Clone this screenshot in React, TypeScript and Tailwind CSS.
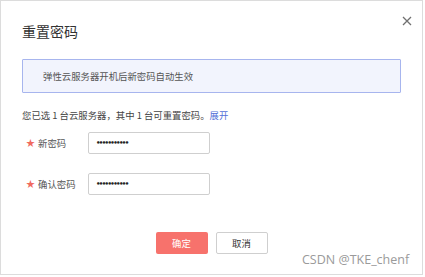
import React from "react";

const cjk = { fontFamily: '"Noto Sans CJK SC", "Noto Sans", sans-serif' };

export default function App() {
  return (
    <div className="w-[425px] h-[277px] bg-white" style={cjk}>
      <div className="relative w-[423px] h-[275px] border border-[#dcdcdc] bg-white px-[21px] flex flex-col">
        <button className="absolute left-[399px] top-[13px] w-[13px] h-[13px] flex items-center justify-center">
          <svg width="10" height="10" viewBox="0 0 10 10">
            <path d="M1 1L9 9M9 1L1 9" stroke="#707070" strokeWidth="1.3" />
          </svg>
        </button>
        <div className="pt-[20px] text-[14px] leading-[20px] text-[#333]">重置密码</div>
        <div className="mt-[18px] h-[34px] border border-[#a7b5ee] bg-[#f2f4fd] rounded-[1px] flex items-center pl-[20px] text-[9.4px] text-[#555]">
          弹性云服务器开机后新密码自动生效
        </div>
        <div className="mt-[14px] text-[9.4px] leading-[16px] text-[#444]">
          您已选 1 台云服务器，其中 1 台可重置密码。<span className="text-[#5470d8]">展开</span>
        </div>
        <div className="mt-[9px] flex items-center">
          <div className="w-[66px] pl-[4px] flex items-center text-[9.4px] text-[#555]">
            <span className="text-[#f06a5f] text-[9px] mr-[3px]">★</span>新密码
          </div>
          <div className="w-[122px] h-[22px] border border-[#cfcfcf] rounded-[2px] flex items-center pl-[7px]">
            <span className="text-[7px] font-bold tracking-[-1.6px] text-[#222]" style={{ fontFamily: '"DejaVu Sans", sans-serif' }}>•••••••••••</span>
          </div>
        </div>
        <div className="mt-[19px] flex items-center">
          <div className="w-[66px] pl-[4px] flex items-center text-[9.4px] text-[#555]">
            <span className="text-[#f06a5f] text-[9px] mr-[3px]">★</span>确认密码
          </div>
          <div className="w-[122px] h-[22px] border border-[#cfcfcf] rounded-[2px] flex items-center pl-[7px]">
            <span className="text-[7px] font-bold tracking-[-1.6px] text-[#222]" style={{ fontFamily: '"DejaVu Sans", sans-serif' }}>•••••••••••</span>
          </div>
        </div>
        <div className="mt-[37px] flex justify-center gap-[8px]">
          <button className="w-[52px] h-[22px] bg-[#f7726c] rounded-[2px] text-white text-[9.4px]">确定</button>
          <button className="w-[52px] h-[22px] bg-white border border-[#cfcfcf] rounded-[2px] text-[#333] text-[9.4px]">取消</button>
        </div>
        <div
          className="absolute left-[301px] top-[249px] text-[12.5px] leading-[20px] text-[#9a9a9a]"
          style={{ fontFamily: '"Open Sans", "Noto Sans", sans-serif' }}
        >
          CSDN @TKE_chenf
        </div>
      </div>
    </div>
  );
}
